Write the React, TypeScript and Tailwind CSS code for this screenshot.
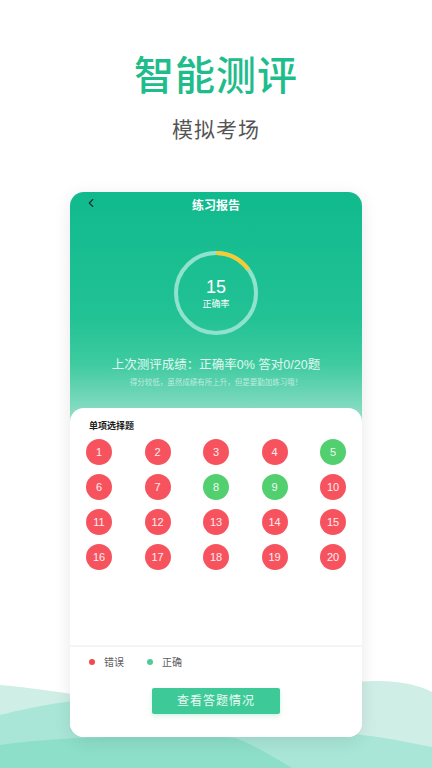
import { ChevronLeft } from 'lucide-react';

const WRONG = 'bg-[#f6535f]';
const RIGHT = 'bg-[#52d06f]';

const ANSWERS = Array.from({ length: 20 }, (_, i) => ({
  n: i + 1,
  ok: [5, 8, 9].includes(i + 1),
}));

function ScoreRing() {
  const r = 40;
  const len = 2 * Math.PI * r;
  return (
    <div className="relative w-[86px] h-[86px] mx-auto mt-[30px] flex flex-col items-center justify-center">
      <svg width="86" height="86" viewBox="0 0 86 86" className="absolute inset-0 -rotate-90">
        <circle cx="43" cy="43" r={r} fill="none" stroke="#8fe3cd" strokeWidth="4" />
        <circle
          cx="43"
          cy="43"
          r={r}
          fill="none"
          stroke="#f4cb35"
          strokeWidth="4"
          strokeDasharray={`${len * 0.15} ${len}`}
        />
      </svg>
      <span className="text-[18px] leading-[20px] text-white">15</span>
      <span className="text-[9px] leading-[12px] text-white mt-[1px]">正确率</span>
    </div>
  );
}

function Waves() {
  return (
    <svg className="absolute left-0 bottom-0 w-[432px] h-[98px]" viewBox="0 670 432 98" preserveAspectRatio="none">
      <path d="M0,685 C60,690 120,705 200,705 C280,705 320,680 380,681 C410,682 425,688 432,692 L432,768 L0,768 Z" fill="#cfeee6" />
      <path d="M0,715 C40,705 80,697 150,697 C250,697 300,728 362,735 C390,738 415,744 432,747 L432,768 L0,768 Z" fill="#a9e6d7" />
      <path d="M0,745 C30,741 60,738 110,737 C170,736 210,735 235,738 C255,745 275,758 292,768 L0,768 Z" fill="#8ddfca" />
    </svg>
  );
}

export default function App() {
  return (
    <div className="relative w-[432px] h-[768px] overflow-hidden bg-white font-['Liberation_Sans','Noto_Sans_CJK_SC',sans-serif]">
      <Waves />

      <div className="relative z-10 flex flex-col items-center">
        <h1 className="pt-[54px] text-[40px] leading-[44px] font-medium tracking-[1px] text-[#1fbc8c]">智能测评</h1>
        <p className="mt-[20px] text-[21px] leading-[24px] tracking-[1px] text-[#555555]">模拟考场</p>

        <div className="mt-[50px] w-[292px] h-[545px] rounded-[14px] bg-white shadow-[0_4px_18px_rgba(0,0,0,0.09)] overflow-hidden flex flex-col">
          {/* green report header */}
          <div className="h-[230px] shrink-0 bg-[linear-gradient(180deg,#10ba8d_0%,#22c295_55%,#3fcba0_75%,#98dfca_100%)]">
            <div className="relative h-[28px] flex items-center justify-center">
              <ChevronLeft size={14} strokeWidth={2} className="absolute left-[14px] top-[4px] text-[#1d2f2a]" />
              <span className="text-[12px] font-bold text-white">练习报告</span>
            </div>
            <ScoreRing />
            <p className="mt-[21px] text-center text-[12.5px] leading-[16px] text-white/85">上次测评成绩：正确率0% 答对0/20题</p>
            <p className="mt-[5px] text-center text-[7.5px] leading-[10px] text-white/60">得分较低，虽然成绩有所上升，但是要勤加练习哦！</p>
          </div>

          {/* answer sheet */}
          <div className="-mt-[14px] flex-1 rounded-t-[14px] bg-white flex flex-col">
            <div className="px-[19px] pt-[12px]">
              <p className="text-[9px] leading-[12px] font-bold text-[#1a1a1a]">单项选择题</p>
            </div>
            <div className="mt-[7px] px-[16px] grid grid-cols-[repeat(5,26px)] justify-between gap-y-[9px]">
              {ANSWERS.map((a) => (
                <div
                  key={a.n}
                  className={`w-[26px] h-[26px] rounded-full flex items-center justify-center text-[11px] text-white/90 ${a.ok ? RIGHT : WRONG}`}
                >
                  {a.n}
                </div>
              ))}
            </div>

            <div className="flex-1" />

            <div className="h-[2px] bg-[#f4f4f4]" />
            <div className="mt-[5px] h-[20px] flex items-center pl-[19px] text-[10px] text-[#5d5d5d]">
              <span className="w-[6px] h-[6px] rounded-full bg-[#f04a4c]" />
              <span className="ml-[9px]">错误</span>
              <span className="ml-[23px] w-[6px] h-[6px] rounded-full bg-[#4fcc96]" />
              <span className="ml-[9px]">正确</span>
            </div>
            <button className="mt-[16px] mb-[23px] mx-auto w-[128px] h-[26px] rounded-[2px] bg-[#3dca98] text-[12px] tracking-[1px] text-white/90 shadow-[0_2px_4px_rgba(61,202,152,0.25)]">
              查看答题情况
            </button>
          </div>
        </div>
      </div>
    </div>
  );
}
